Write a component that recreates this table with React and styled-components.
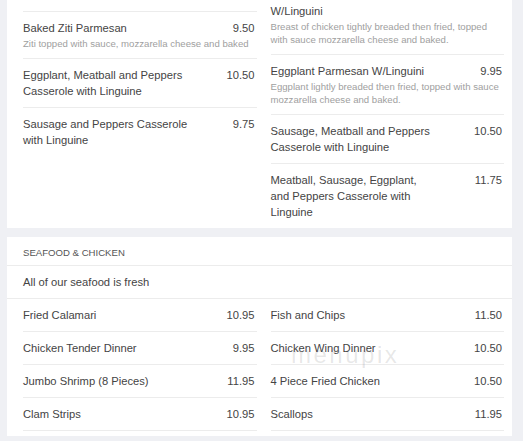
import React from "react";
import styled, { createGlobalStyle } from "styled-components";

const GlobalStyle = createGlobalStyle`
  html, body {
    margin: 0;
    padding: 0;
    height: 441px;
    overflow: hidden;
    background: #eff0f4;
  }
  body {
    font-family: "Liberation Sans", Arial, sans-serif;
    -webkit-font-smoothing: antialiased;
  }
`;

const Page = styled.main`
  display: flex;
  flex-direction: column;
  gap: 9px;
  padding: 0 11px 0 7px;
  margin-top: -21px;
`;

const Card = styled.section`
  position: relative;
  background: #ffffff;
  padding-bottom: ${(p) => (p.$pad ? "5px" : "0")};
`;

const SectionTitle = styled.h2`
  margin: 0;
  padding: 8px 16px 4px;
  font-size: 9.6px;
  line-height: 16px;
  font-weight: normal;
  text-transform: uppercase;
  color: #555555;
  border-bottom: 1px solid #ececec;
`;

const Intro = styled.p`
  margin: 0;
  padding: 8px 16px 8px;
  font-size: 11.2px;
  line-height: 16px;
  color: #444444;
  border-bottom: 1px solid #ececec;
`;

const Columns = styled.div`
  display: grid;
  grid-template-columns: 1fr 1fr;
  column-gap: 14px;
  align-items: start;
  padding: 0 8px 0 16px;
`;

const List = styled.div`
  display: flex;
  flex-direction: column;
  border-bottom: ${(p) => (p.$closed ? "1px solid #ececec" : "none")};
`;

const Item = styled.div`
  padding: 8px 2px 8px 0;
  & + & {
    border-top: 1px solid #ececec;
  }
`;

const Head = styled.div`
  display: flex;
  justify-content: space-between;
  align-items: flex-start;
  font-size: 11.2px;
  line-height: 16px;
  color: #444444;
`;

const Name = styled.span`
  flex: 0 0 166px;
`;

const Price = styled.span`
  white-space: nowrap;
  text-align: right;
`;

const Desc = styled.div`
  margin-top: 1px;
  font-size: 9.6px;
  line-height: 13px;
  color: #a0a0a0;
`;

const Watermark = styled.span`
  position: absolute;
  left: 284px;
  top: 106px;
  font-size: 24px;
  line-height: 24px;
  letter-spacing: 2.5px;
  color: rgba(110, 110, 110, 0.16);
  pointer-events: none;
`;

const pastaLeft = [
  { name: "Stuffed Shells", price: "9.50" },
  {
    name: "Baked Ziti Parmesan",
    price: "9.50",
    desc: "Ziti topped with sauce, mozzarella cheese and baked",
  },
  { name: "Eggplant, Meatball and Peppers Casserole with Linguine", price: "10.50" },
  { name: "Sausage and Peppers Casserole with Linguine", price: "9.75" },
];

const pastaRight = [
  {
    name: "Chicken Cutlet Parmesan W/Linguini",
    price: "9.95",
    desc: "Breast of chicken tightly breaded then fried, topped with sauce mozzarella cheese and baked.",
  },
  {
    name: "Eggplant Parmesan W/Linguini",
    price: "9.95",
    desc: "Eggplant lightly breaded then fried, topped with sauce mozzarella cheese and baked.",
  },
  { name: "Sausage, Meatball and Peppers Casserole with Linguine", price: "10.50" },
  { name: "Meatball, Sausage, Eggplant, and Peppers Casserole with Linguine", price: "11.75" },
];

const seaLeft = [
  { name: "Fried Calamari", price: "10.95" },
  { name: "Chicken Tender Dinner", price: "9.95" },
  { name: "Jumbo Shrimp (8 Pieces)", price: "11.95" },
  { name: "Clam Strips", price: "10.95" },
];

const seaRight = [
  { name: "Fish and Chips", price: "11.50" },
  { name: "Chicken Wing Dinner", price: "10.50" },
  { name: "4 Piece Fried Chicken", price: "10.50" },
  { name: "Scallops", price: "11.95" },
];

function MenuList({ items, closed }) {
  return (
    <List $closed={closed}>
      {items.map((it) => (
        <Item key={it.name}>
          <Head>
            <Name>{it.name}</Name>
            <Price>{it.price}</Price>
          </Head>
          {it.desc && <Desc>{it.desc}</Desc>}
        </Item>
      ))}
    </List>
  );
}

export default function App() {
  return (
    <>
      <GlobalStyle />
      <Page>
        <Card>
          <Columns>
            <MenuList items={pastaLeft} />
            <MenuList items={pastaRight} />
          </Columns>
        </Card>
        <Card $pad>
          <SectionTitle>Seafood &amp; Chicken</SectionTitle>
          <Intro>All of our seafood is fresh</Intro>
          <Columns>
            <MenuList items={seaLeft} closed />
            <MenuList items={seaRight} closed />
          </Columns>
          <Watermark>menupix</Watermark>
        </Card>
      </Page>
    </>
  );
}
